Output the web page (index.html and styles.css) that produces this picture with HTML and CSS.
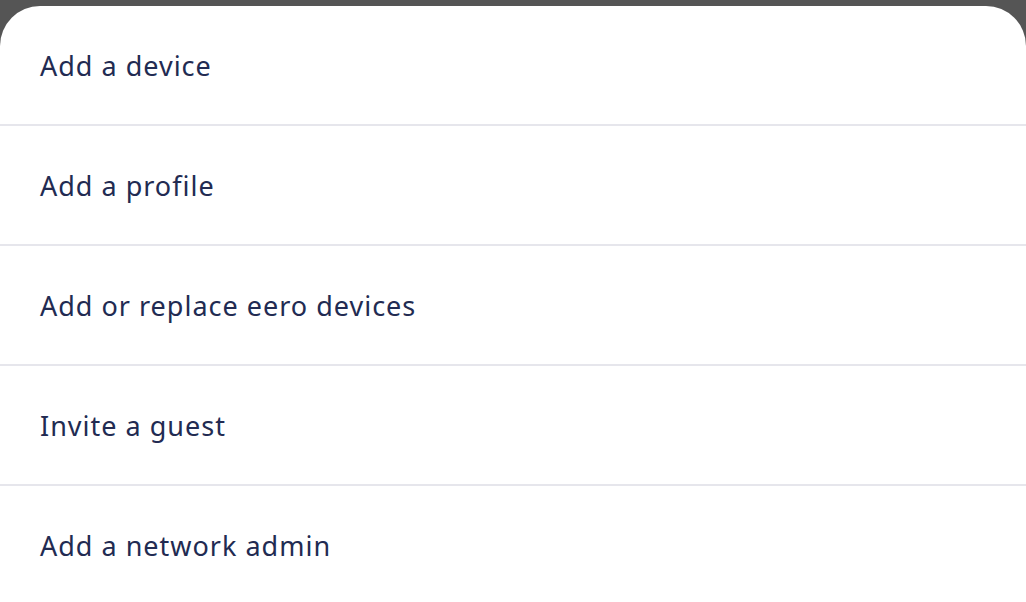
FILE: index.html
```html
<!DOCTYPE html>
<html lang="en">
<head>
  <meta charset="UTF-8">
  <title>Network actions</title>
  <link rel="stylesheet" href="styles.css">
</head>
<body>

<div class="sheet">
  <!-- アクション一覧 -->
  <div class="action-row">Add a device</div>
  <div class="action-row">Add a profile</div>
  <div class="action-row">Add or replace eero devices</div>
  <div class="action-row">Invite a guest</div>
  <div class="action-row">Add a network admin</div>
</div>

</body>
</html>
```

FILE: styles.css
```css
/* 背景（下の画面が暗くなっている部分） */
html, body {
  margin: 0;
  height: 100%;
}
body {
  background-color: #555555;
  font-family: "Noto Sans", sans-serif;
  padding-top: 6px;
  box-sizing: border-box;
  overflow: hidden;
}

/* ボトムシート */
.sheet {
  background-color: #fff;
  border-radius: 40px 40px 0 0;
  height: 100%;
}

/* 各行 */
.action-row {
  height: 118px;
  display: flex;
  align-items: center;
  padding-left: 40px;
  font-size: 27px;
  letter-spacing: 1px;
  color: #222b52;
  border-bottom: 2px solid #e6e6ec;
}
.action-row:last-child {
  border-bottom: none;
}
```
